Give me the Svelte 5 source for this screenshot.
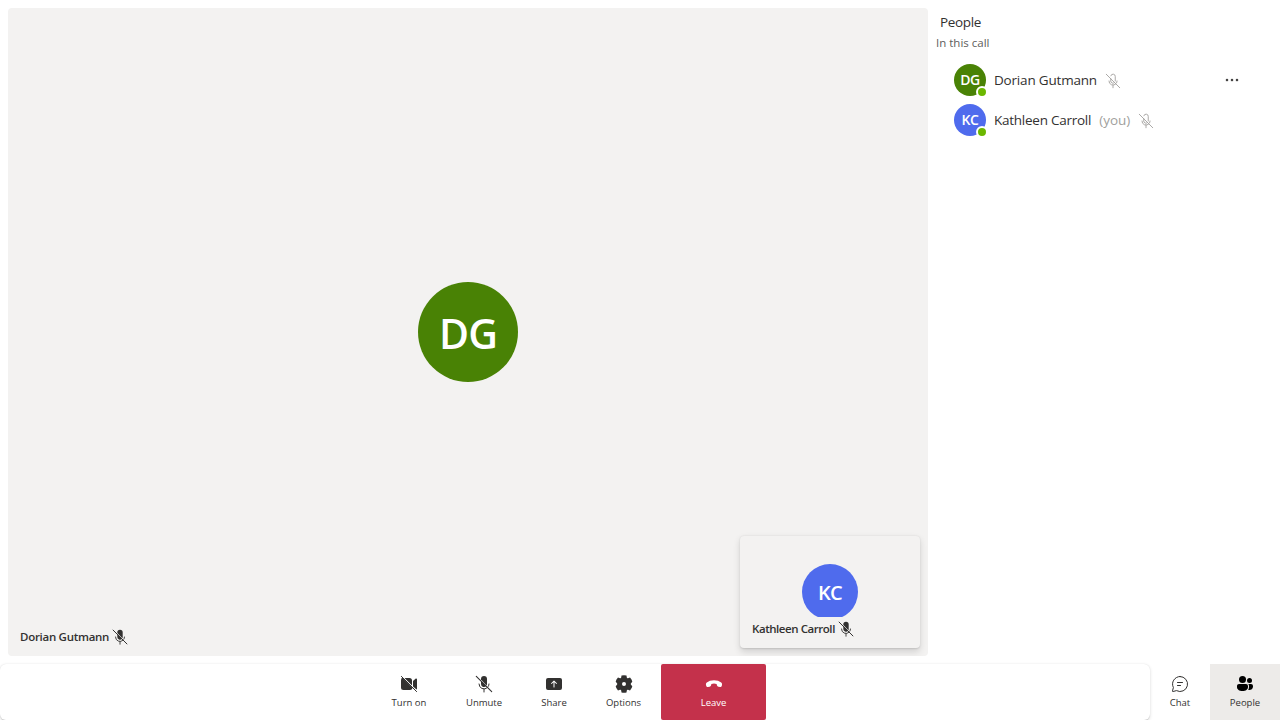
<script>
  const people = [
    { initials: 'DG', name: 'Dorian Gutmann', color: '#498205', you: false, spacing: -0.19 },
    { initials: 'KC', name: 'Kathleen Carroll', color: '#4f6bed', you: true, spacing: -0.25 }
  ];
  const controls = [
    { icon: 'camera', label: 'Turn on', width: 74 },
    { icon: 'micoff', label: 'Unmute', width: 76 },
    { icon: 'share', label: 'Share', width: 64 },
    { icon: 'gear', label: 'Options', width: 75 },
    { icon: 'leave', label: 'Leave', width: 105 }
  ];
</script>

{#snippet micFilled(size)}
  <svg width={size} height={size} viewBox="0 0 20 20" fill="currentColor" aria-hidden="true">
    <path d="M7 5.500V5a3 3 0 0 1 6 0v5c0 .5-.1 1-.4 1.400z" />
    <path d="M7 7 12.300 12A3 3 0 0 1 7 10z" />
    <path d="M5 10a5 5 0 0 0 8.300 3.700M10 15v3M15 10a5 5 0 0 1-.7 2.400" fill="none" stroke="currentColor" stroke-linecap="round" />
    <path d="m2.300 2.300 15.400 15.400" fill="none" stroke="currentColor" stroke-width="1.100" stroke-linecap="round" />
  </svg>
{/snippet}

{#snippet micOutline()}
  <svg width="18" height="18" viewBox="0 0 20 20" fill="none" stroke="currentColor" stroke-linecap="round" aria-hidden="true">
    <path d="M7.500 7.500V10a2.500 2.500 0 0 0 4.200 1.800M7.600 4.200A2.500 2.500 0 0 1 12.500 5v5M5.500 10a4.500 4.500 0 0 0 7.700 3.200M14.500 10a4.500 4.500 0 0 1-.5 2M10 14.500v3M2.500 2.500l15 15" />
  </svg>
{/snippet}

{#snippet icon(name)}
  {#if name === 'micoff'}
    {@render micFilled(20)}
  {:else}
    <svg width="20" height="20" viewBox="0 0 20 20" fill="currentColor" aria-hidden="true">
      {#if name === 'camera'}
        <path d="M3.200 3.600 13.500 13.900A2.500 2.500 0 0 1 11 16H4.500A2.500 2.500 0 0 1 2 13.500v-7c0-1.200.400-2.200 1.200-2.900zM5.500 4H10.500A2.500 2.500 0 0 1 13 6.500v5zM14 6.900l2.800-2.300c.5-.4 1.200-.1 1.200.6v9.600c0 .4-.2.700-.5.800L14 12.400z" />
        <path d="m2.400 2.400 15.200 15.200" fill="none" stroke="currentColor" stroke-linecap="round" />
      {:else if name === 'share'}
        <path fill-rule="evenodd" d="M4 4h12a2 2 0 0 1 2 2v8a2 2 0 0 1-2 2H4a2 2 0 0 1-2-2V6a2 2 0 0 1 2-2zm5.650 2.650-2.500 2.500a.5.5 0 0 0 .7.700L9.500 8.200V13a.5.5 0 0 0 1 0V8.200l1.650 1.650a.5.5 0 0 0 .7-.7l-2.500-2.500a.5.5 0 0 0-.7 0z" />
      {:else if name === 'gear'}
        <path fill-rule="evenodd" d="M7.500 1.600Q10 1 12.500 1.600L12.800 3.600Q13.100 4.500 14 4.200L16 3.600Q17.900 5.400 18.300 7.700L17 9.200Q16.400 10 17 10.800L18.300 12.300Q17.900 14.600 16 16.400L14 15.800Q13.100 15.500 12.800 16.400L12.500 18.400Q10 19 7.500 18.400L7.200 16.400Q6.900 15.500 6 15.800L4 16.400Q2.100 14.600 1.700 12.300L3 10.800Q3.600 10 3 9.200L1.700 7.700Q2.100 5.400 4 3.600L6 4.200Q6.900 4.500 7.200 3.600ZM10 8a2 2 0 1 0 0 4 2 2 0 0 0 0-4z" />
      {:else if name === 'leave'}
        <path d="m18 10.900-.2.900c-.2.800-.9 1.300-1.700 1.200l-1.700-.3c-.7-.1-1.200-.6-1.400-1.300l-.4-1.500Q10 9.100 7.400 9.900L7 11.400c-.2.700-.7 1.200-1.400 1.300l-1.700.3c-.8.100-1.500-.4-1.700-1.200L2 10.900c-.2-.9.100-1.800.8-2.400Q5.500 6.200 10 6.200t7.200 2.300c.7.600 1 1.500.8 2.400z" />
      {:else if name === 'chat'}
        <path d="M10 2.500a7.500 7.500 0 1 1-3.500 14.100l-3.400.9a.5.500 0 0 1-.6-.6l.9-3.400A7.500 7.500 0 0 1 10 2.500zM7.500 8.500h5M7.500 11.500h3" fill="none" stroke="currentColor" stroke-linecap="round" />
      {:else if name === 'people'}
        <circle cx="7.500" cy="5.500" r="3.500" /><circle cx="14.500" cy="6.500" r="2.500" />
        <path d="M4 10h7a2 2 0 0 1 2 2v1c0 2.500-2.300 4-5.500 4S2 15.500 2 13v-1c0-1.100.9-2 2-2zM13.300 10H16a2 2 0 0 1 2 2v.5c0 2.500-1.800 3.500-3.800 3.500l-1-.1c.5-.8.800-1.700.8-2.900v-1c0-.7-.3-1.400-.7-2z" />
      {/if}
    </svg>
  {/if}
{/snippet}

<div class="app">
  <div class="content">
    <main class="stage">
      <div class="avatar large">DG</div>
      <div class="caption"><span class="speaker">Dorian Gutmann</span>{@render micFilled(18)}</div>
      <section class="local">
        <div class="avatar medium">KC</div>
        <div class="caption"><span class="self">Kathleen Carroll</span>{@render micFilled(18)}</div>
      </section>
    </main>
    <aside>
      <h1>People</h1>
      <h2>In this call</h2>
      <ul>
        {#each people as p}
          <li>
            <div class="avatar small" style:background={p.color}>{p.initials}<i></i></div>
            <span class="name" style:letter-spacing={`${p.spacing}px`}>{p.name}</span>
            {#if p.you}<span class="you">(you)</span>{/if}
            <span class="muted">{@render micOutline()}</span>
            {#if !p.you}
              <button class="more" aria-label="More options"><b></b><b></b><b></b></button>
            {/if}
          </li>
        {/each}
      </ul>
    </aside>
  </div>
  <footer>
    <nav class="bar">
      {#each controls as c}
        <button class="control" class:leave={c.icon === 'leave'} style:width={`${c.width}px`}>
          {@render icon(c.icon)}<span>{c.label}</span>
        </button>
      {/each}
    </nav>
    <button class="control chat">{@render icon('chat')}<span>Chat</span></button>
    <button class="control active">{@render icon('people')}<span>People</span></button>
  </footer>
</div>

<style>
  :global(body) { margin: 0; background: #fff; overflow: hidden; }
  .app { width: 1280px; height: 720px; display: flex; flex-direction: column; color: #323130; font-family: "Open Sans", sans-serif; }
  .app * { box-sizing: border-box; }
  svg { display: block; flex: none; }
  button { border: 0; padding: 0; background: none; font: inherit; color: inherit; }
  .content { height: 664px; display: flex; padding: 8px 0 8px 8px; }
  .stage { position: relative; width: 920px; height: 648px; border-radius: 4px; background: #f3f2f1; display: flex; align-items: center; justify-content: center; overflow: hidden; }
  .avatar { border-radius: 50%; color: #fff; font-weight: 600; display: flex; align-items: center; justify-content: center; flex: none; }
  .large { width: 100px; height: 100px; background: #498205; font-size: 41px; letter-spacing: -1px; padding-top: 1px; }
  .medium { width: 56px; height: 56px; background: #4f6bed; font-size: 20px; letter-spacing: -.8px; }
  .small { position: relative; width: 32px; height: 32px; font-size: 14px; letter-spacing: -.4px; padding-bottom: 1px; }
  .small i { position: absolute; right: -2px; bottom: -2px; width: 12px; height: 12px; border: 2px solid #fff; border-radius: 50%; background: #6bb700; }
  .caption { position: absolute; left: 8px; bottom: 8px; height: 23px; padding: 0 4px; display: flex; align-items: center; gap: 2px; background: #f3f2f1; font-size: 11.500px; font-weight: 600; white-space: nowrap; }
  .speaker { letter-spacing: -.28px; width: 89px; }
  .self { letter-spacing: -.44px; width: 83px; }
  .local { position: absolute; right: 8px; bottom: 8px; width: 180px; height: 112px; display: flex; align-items: center; justify-content: center; background: #f3f2f1; border-radius: 4px; box-shadow: 0 3.200px 7.200px rgba(0,0,0,.132), 0 .6px 1.800px rgba(0,0,0,.108); }
  .local .caption { width: 164px; }
  aside { width: 352px; }
  h1, h2 { margin: 0; font-weight: 400; }
  h1 { font-size: 13.500px; line-height: 20px; padding: 4px 12px; letter-spacing: -.35px; }
  h2 { font-size: 11.500px; line-height: 16px; padding: 0 8px; margin-top: -1px; color: #605e5c; letter-spacing: 0; }
  ul { list-style: none; margin: 9px 0 0; padding: 0 26px; }
  li { display: flex; align-items: center; height: 40px; font-size: 13.500px; white-space: nowrap; }
  .name { margin-left: 8px; }
  .you { margin-left: 8px; color: #a19f9d; letter-spacing: 0; }
  .muted { margin-left: 7px; margin-top: 2px; color: #a19f9d; }
  .more { display: flex; gap: 3px; margin-left: auto; margin-right: 16px; }
  .more b { width: 2px; height: 2px; background: #201f1e; box-shadow: 0 0 0 .5px #201f1e55; border-radius: 1px; }
  footer { height: 56px; display: flex; }
  .bar { width: 1150px; display: flex; justify-content: center; padding-right: 12px; border-radius: 6px; box-shadow: 0 1.600px 3.600px rgba(0,0,0,.132), 0 .3px .9px rgba(0,0,0,.108); background: #fff; }
  .control { height: 56px; display: flex; flex-direction: column; align-items: center; padding-top: 10px; font-size: 9.500px; line-height: 16px; }
  .control span { margin-top: 1px; letter-spacing: 0; }
  .leave { background: #c4314b; color: #fff; border-radius: 2px; }
  .chat { width: 60px; }
  .active { width: 70px; background: #edebe9; }
  .active svg { color: #000; }
</style>
